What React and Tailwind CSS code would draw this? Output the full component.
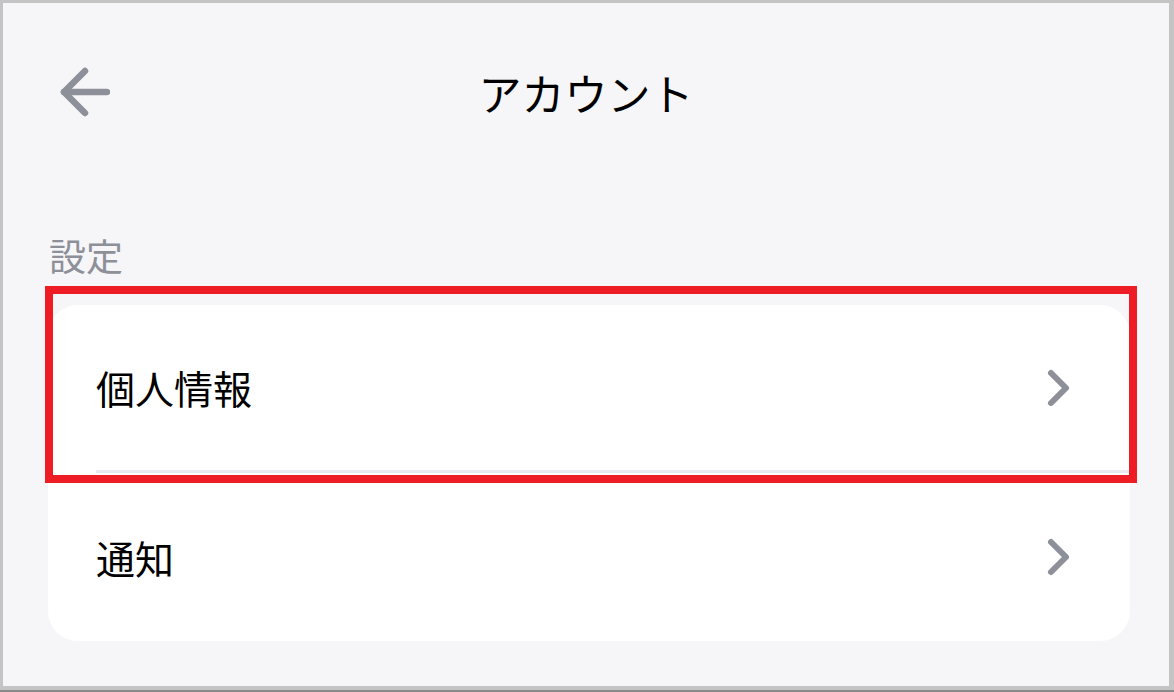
import React from 'react';

const font = { fontFamily: '"Noto Sans CJK JP", "Noto Sans", sans-serif' };

const BackArrow = () => (
    <svg width="52" height="52" viewBox="0 0 52 52" fill="none" stroke="#8e9099" strokeWidth="6.5" strokeLinecap="round" strokeLinejoin="round">
        <path d="M27 5 L6 26 L27 47" />
        <path d="M6 26 H49" />
    </svg>
);

const Chevron = () => (
    <svg width="28" height="40" viewBox="0 0 28 40" fill="none" stroke="#8e9099" strokeWidth="6" strokeLinecap="round" strokeLinejoin="round">
        <path d="M6 5 L21 20 L6 35" />
    </svg>
);

const Row = ({ label }) => (
    <div className="flex items-center justify-between pl-[48px] pr-[57px] h-full">
        <span className="text-[39px] leading-none text-black">{label}</span>
        <Chevron />
    </div>
);

const App = () => {
    return (
        <div className="w-[1174px] h-[692px] bg-[#8a8a8a] pb-[2px]" style={font}>
            <div className="h-full border-t-[3px] border-l-[3px] border-r-[5px] border-b-[4px] border-[#c4c4c4] bg-[#f6f6f8] flex flex-col">
                {/* header */}
                <div className="h-[178px] grid grid-cols-[1fr_auto_1fr] items-center">
                    <div className="pl-[55px] flex items-center">
                        <BackArrow />
                    </div>
                    <h1 className="text-[43px] leading-none text-black font-normal">アカウント</h1>
                    <div />
                </div>

                <div className="ml-[45px] mr-[39px]">
                    <div className="mt-[54px] text-[37px] leading-[40px] text-[#8e9099] pl-[1px]">設定</div>

                    <div className="relative mt-[30px] bg-white rounded-[30px]">
                        <div className="h-[165px]">
                            <Row label="個人情報" />
                        </div>
                        <div className="ml-[48px] h-[3px] bg-[#e9e9ef]" />
                        <div className="h-[168px]">
                            <Row label="通知" />
                        </div>

                        {/* annotation */}
                        <div className="absolute left-[-3px] top-[-19px] w-[1092px] h-[197px] border-[8px] border-[#ee1c25] pointer-events-none" />
                    </div>
                </div>
            </div>
        </div>
    );
};

export default App;
